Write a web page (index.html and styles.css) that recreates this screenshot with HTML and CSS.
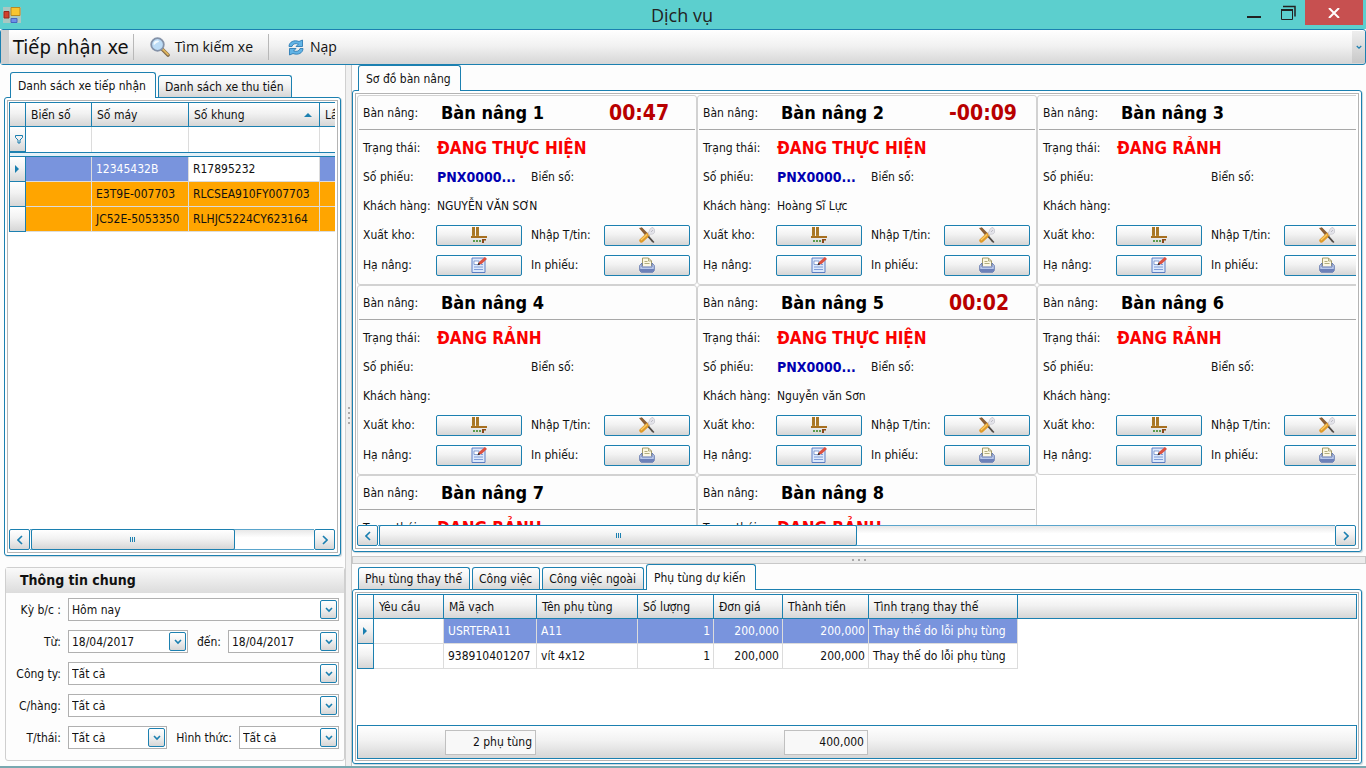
FILE: index.html
```html
<!DOCTYPE html>
<html lang="vi">
<head>
    <meta charset="UTF-8">
    <meta name="viewport" content="width=device-width, initial-scale=1.0">
    <title>Dịch vụ</title>
    <link rel="stylesheet" href="styles.css">
</head>
<body>
    <!-- shared icons -->
    <svg class="icon-defs" width="0" height="0" aria-hidden="true">
        <symbol id="i-down" viewBox="0 0 8 6"><path d="M1 1l3 3 3-3" fill="none" stroke="#1a7fb0" stroke-width="1.6"/></symbol>
        <symbol id="i-left" viewBox="0 0 6 10"><path d="M5 1L1 5l4 4" fill="none" stroke="#1a7fb0" stroke-width="1.6"/></symbol>
        <symbol id="i-right" viewBox="0 0 6 10"><path d="M1 1l4 4-4 4" fill="none" stroke="#1a7fb0" stroke-width="1.6"/></symbol>
        <symbol id="i-row" viewBox="0 0 4 8"><path d="M0 0l4 4-4 4z" fill="#1a7fb0"/></symbol>
        <symbol id="i-stock" viewBox="0 0 16 16">
            <path d="M1 0h3v9H1zM5 0h3v9H5z" fill="#b8862b"/>
            <path d="M1 1h3M1 3h3M1 5h3M1 7h3M5 1h3M5 3h3M5 5h3M5 7h3" stroke="#8a5c1c" stroke-width=".7"/>
            <path d="M0 9h16v2H0z" fill="#a8701f"/>
            <path d="M11 12h4v1.500h-2V16h-2z" fill="#8a4a1c"/>
            <path d="M2 13h2v2H2zM5 13h2v2H5zM8 13h2v2H8z" fill="#5c9a4c"/>
        </symbol>
        <symbol id="i-tools" viewBox="0 0 16 16">
            <path d="M2 1l12 14" stroke="#4a4038" stroke-width="1.500"/>
            <path d="M0 1l3-.5 7 7-3 2z" fill="#8a6038"/>
            <path d="M2.500 13.500l6-5.500" stroke="#e09a28" stroke-width="4.400" stroke-linecap="round"/>
            <path d="M2 13l6-5.500" stroke="#f8cd68" stroke-width="1.300"/>
            <path d="M9 6l1.500-2C10.500 2 12 .5 14 .5l1.500 2v3C14.500 7 13 7.500 11.500 7L10 8.500z" fill="#e4e4ea" stroke="#b0b0ba" stroke-width=".5"/>
            <path d="M12 5l2-2" stroke="#b0b0ba" stroke-width=".8"/>
            <path d="M9.500 9.500l5.500 6" stroke="#55504c" stroke-width="1.200"/>
        </symbol>
        <symbol id="i-edit" viewBox="0 0 16 16">
            <path d="M1 1h13v14.500H1z" fill="#dce8fb" stroke="#5c7fc4"/>
            <path d="M3 4h5v3.500H3z" fill="#fff" stroke="#5c7fc4" stroke-width=".7"/>
            <path d="M3 10h9M3 12.500h9M10 7.500h2" stroke="#7f9cd8"/>
            <path d="M7 7.500l1-2.500 6-5L16 2l-5.500 5z" fill="#dc5040"/>
            <path d="M6.500 8.300l1-2.800 2 2z" fill="#3f3028"/>
        </symbol>
        <symbol id="i-print" viewBox="0 0 16 16">
            <path d="M3.500 9V1h6l3 3v5" fill="#fdf8e2" stroke="#a09a68"/>
            <path d="M9.500 1v3h3M5.500 4.500h3M5.500 6.500h5" fill="none" stroke="#a09a68" stroke-width=".8"/>
            <path d="M3 6L.7 8.500v5l1.500 1.800h11.600l1.500-1.800v-5L13 6v4H3z" fill="#b9c8ea" stroke="#6075ae" stroke-width=".9"/>
            <path d="M1 12h14v1.500l-1.500 1.500h-11L1 13.500z" fill="#6c80b8"/>
        </symbol>
    </svg>

    <header class="titlebar">
        <svg class="app-icon" width="18" height="18" viewBox="0 0 18 18">
            <path d="M0 1h18v16H0z" fill="#a9c8c2"/>
            <path d="M8 1.500h9v8H8z" fill="#f8c530" stroke="#b78a22"/>
            <path d="M1 5.500h5v6.500H1z" fill="#d0402c" stroke="#94281c"/>
            <path d="M8 12.500h6v4H8z" fill="#6d90e8" stroke="#4565c0"/>
        </svg>
        <h1>Dịch vụ</h1>
        <div class="window-buttons">
            <button aria-label="Minimize"><svg width="14" height="18"><path d="M0 13h14" stroke="#222" stroke-width="2"/></svg></button>
            <button aria-label="Restore"><svg width="16" height="18" viewBox="0 0 16 18"><path d="M1.500 5.500h11v10h-11z" fill="none" stroke="#222"/><path d="M1 6h12" stroke="#222" stroke-width="2"/><path d="M3 2.500h12v10" fill="none" stroke="#222" stroke-width="1.500"/></svg></button>
            <button class="close" aria-label="Close"><svg width="12" height="10" viewBox="0 0 12 10"><path d="M1 0l10 10M11 0L1 10" stroke="#fff" stroke-width="2"/></svg></button>
        </div>
    </header>

    <nav class="toolbar">
        <span class="toolbar-title">Tiếp nhận xe</span>
        <button class="tool">
            <svg width="20" height="20" viewBox="0 0 20 20">
                <path d="M12 12l6 6" stroke="#7f6a4a" stroke-width="3.600" stroke-linecap="round"/>
                <path d="M13 12.500l5 5" stroke="#dfb45c" stroke-width="1.800" stroke-linecap="round"/>
                <circle cx="7.500" cy="7.500" r="6.300" fill="#bcdcf6" stroke="#8492a8" stroke-width="1.800"/>
                <path d="M3.500 7.500a4 4 0 0 1 4-4c2 0 2 1.500 0 2s-2.500 3-4 2z" fill="#f2faff"/>
            </svg>
            Tìm kiếm xe
        </button>
        <button class="tool tool-reload">
            <svg width="16" height="17" viewBox="0 0 16 17">
                <path d="M1 7.500C1 3 6 .5 11 2.500L14.500 1v6.500H8l2.500-2.500C7 4 4.500 5 4 7.500z" fill="#62b4e6" stroke="#2f7db4" stroke-width=".9"/>
                <path d="M15 9.500c0 4.500-5 7-10 5L1.500 16V9.500H8L5.500 12c3.500 1 6 0 6.500-2.500z" fill="#62b4e6" stroke="#2f7db4" stroke-width=".9"/>
            </svg>
            Nạp
        </button>
        <button class="toolbar-more" aria-label="More"><svg width="6" height="5"><use href="#i-down"/></svg></button>
    </nav>

    <main class="workspace">
        <aside class="sidebar">
            <div class="tabs">
                <button class="tab active">Danh sách xe tiếp nhận</button>
                <button class="tab">Danh sách xe thu tiền</button>
            </div>
            <section class="panel vehicle-panel">
                <div class="panel-inner">
                    <div class="grid-area">
                        <table class="grid vehicles">
                            <colgroup><col class="c-mark"><col class="c-plate"><col class="c-engine"><col class="c-frame"><col class="c-times"></colgroup>
                            <thead>
                                <tr><th></th><th>Biển số</th><th>Số máy</th><th class="sorted">Số khung</th><th>Lần</th></tr>
                            </thead>
                            <tbody>
                                <tr class="filter">
                                    <th><svg width="8" height="9" viewBox="0 0 8 9"><path d="M.5 .5h7v2L5 5v3H3V5L.5 2.500z" fill="none" stroke="#1a7fb0"/></svg></th>
                                    <td></td><td></td><td></td><td></td>
                                </tr>
                                <tr class="divider"><td colspan="5"></td></tr>
                                <tr class="selected"><th><svg width="4" height="8"><use href="#i-row"/></svg></th><td></td><td>12345432B</td><td class="focused">R17895232</td><td></td></tr>
                                <tr class="warn"><th></th><td></td><td>E3T9E-007703</td><td>RLCSEA910FY007703</td><td></td></tr>
                                <tr class="warn"><th></th><td></td><td>JC52E-5053350</td><td>RLHJC5224CY623164</td><td></td></tr>
                            </tbody>
                        </table>
                    </div>
                    <div class="scrollbar">
                        <button aria-label="Left"><svg width="6" height="10"><use href="#i-left"/></svg></button>
                        <div class="track"><div class="thumb thumb-list"></div></div>
                        <button aria-label="Right"><svg width="6" height="10"><use href="#i-right"/></svg></button>
                    </div>
                </div>
            </section>

            <form class="filters">
                <h2>Thông tin chung</h2>
                <div class="field-row">
                    <label for="period">Kỳ b/c :</label>
                    <div class="combo"><select id="period"><option>Hôm nay</option></select><span class="drop"><svg width="8" height="6"><use href="#i-down"/></svg></span></div>
                </div>
                <div class="field-row">
                    <label for="from">Từ:</label>
                    <div class="combo combo-from"><input id="from" type="text" value="18/04/2017"><span class="drop"><svg width="8" height="6"><use href="#i-down"/></svg></span></div>
                    <label class="mid" for="to">đến:</label>
                    <div class="combo"><input id="to" type="text" value="18/04/2017"><span class="drop"><svg width="8" height="6"><use href="#i-down"/></svg></span></div>
                </div>
                <div class="field-row">
                    <label for="company">Công ty:</label>
                    <div class="combo"><select id="company"><option>Tất cả</option></select><span class="drop"><svg width="8" height="6"><use href="#i-down"/></svg></span></div>
                </div>
                <div class="field-row">
                    <label for="store">C/hàng:</label>
                    <div class="combo"><select id="store"><option>Tất cả</option></select><span class="drop"><svg width="8" height="6"><use href="#i-down"/></svg></span></div>
                </div>
                <div class="field-row">
                    <label for="state">T/thái:</label>
                    <div class="combo combo-state"><select id="state"><option>Tất cả</option></select><span class="drop"><svg width="8" height="6"><use href="#i-down"/></svg></span></div>
                    <label class="mid mid-kind" for="kind">Hình thức:</label>
                    <div class="combo"><select id="kind"><option>Tất cả</option></select><span class="drop"><svg width="8" height="6"><use href="#i-down"/></svg></span></div>
                </div>
            </form>
        </aside>

        <div class="splitter-v"><i></i><i></i><i></i><i></i></div>

        <div class="content">
            <div class="tabs">
                <button class="tab active">Sơ đồ bàn nâng</button>
            </div>
            <section class="panel lift-panel">
                <div class="panel-inner">
                    <div class="lifts" id="lifts"></div>
                    <div class="scrollbar">
                        <button aria-label="Left"><svg width="6" height="10"><use href="#i-left"/></svg></button>
                        <div class="track"><div class="thumb thumb-lifts"></div></div>
                        <button aria-label="Right"><svg width="6" height="10"><use href="#i-right"/></svg></button>
                    </div>
                </div>
            </section>

            <div class="splitter-h"><i></i><i></i><i></i></div>

            <div class="tabs">
                <button class="tab">Phụ tùng thay thế</button>
                <button class="tab">Công việc</button>
                <button class="tab">Công việc ngoài</button>
                <button class="tab active">Phụ tùng dự kiến</button>
            </div>
            <section class="panel parts-panel">
                <div class="panel-inner">
                    <div class="grid-area">
                        <table class="grid parts">
                            <colgroup><col class="c-mark"><col class="c-req"><col class="c-code"><col class="c-name"><col class="c-qty"><col class="c-price"><col class="c-total"><col class="c-cond"><col></colgroup>
                            <thead>
                                <tr><th></th><th>Yêu cầu</th><th>Mã vạch</th><th>Tên phụ tùng</th><th>Số lượng</th><th>Đơn giá</th><th>Thành tiền</th><th>Tình trạng thay thế</th><th></th></tr>
                            </thead>
                            <tbody>
                                <tr class="selected"><th><svg width="4" height="8"><use href="#i-row"/></svg></th><td class="focused"></td><td>USRTERA11</td><td>A11</td><td class="num">1</td><td class="num">200,000</td><td class="num">200,000</td><td>Thay thế do lỗi phụ tùng</td><td class="rest"></td></tr>
                                <tr><th></th><td></td><td>938910401207</td><td>vít 4x12</td><td class="num">1</td><td class="num">200,000</td><td class="num">200,000</td><td>Thay thế do lỗi phụ tùng</td><td class="rest"></td></tr>
                            </tbody>
                        </table>
                    </div>
                    <div class="summary">
                        <output class="sum-count">2 phụ tùng</output>
                        <output class="sum-total">400,000</output>
                    </div>
                </div>
            </section>
        </div>
    </main>

    <footer class="taskbar-edge"></footer>

    <script>
        const BUSY = 'ĐANG THỰC HIỆN';
        const FREE = 'ĐANG RẢNH';
        const lifts = [
            { status: BUSY, time: '00:47', ticket: 'PNX0000...', customer: 'NGUYỄN VĂN SƠN' },
            { status: BUSY, time: '-00:09', ticket: 'PNX0000...', customer: 'Hoàng Sĩ Lực' },
            { status: FREE },
            { status: FREE },
            { status: BUSY, time: '00:02', ticket: 'PNX0000...', customer: 'Nguyễn văn Sơn' },
            { status: FREE },
            { status: FREE },
            { status: FREE }
        ];

        const action = (id, icon, text) => `
            <label for="${id}">${text}</label>
            <button id="${id}"><svg width="16" height="16"><use href="#${icon}"/></svg></button>`;

        document.getElementById('lifts').innerHTML = lifts.map((l, i) => `
            <article class="lift">
                <header>
                    <span>Bàn nâng:</span>
                    <h3>Bàn nâng ${i + 1}</h3>
                    <time>${l.time || ''}</time>
                </header>
                <div class="lift-body">
                    <span>Trạng thái:</span><strong class="status">${l.status}</strong>
                    <span>Số phiếu:</span><strong class="ticket">${l.ticket || ''}</strong><span>Biển số:</span><span></span>
                    <span>Khách hàng:</span><span class="customer">${l.customer || ''}</span>
                    ${action('out' + i, 'i-stock', 'Xuất kho:')}
                    ${action('info' + i, 'i-tools', 'Nhập T/tin:')}
                    ${action('lower' + i, 'i-edit', 'Hạ nâng:')}
                    ${action('print' + i, 'i-print', 'In phiếu:')}
                </div>
            </article>`).join('');
    </script>
</body>
</html>
```
FILE: styles.css
```css
* {
    box-sizing: border-box;
}
:root {
    --blue: #1c80b0;
    --grey: #b4b4b4;
    --face: linear-gradient(#ffffff, #f2f2f2 45%, #d6d6d6);
}
body {
    margin: 0;
    height: 100vh;
    display: flex;
    flex-direction: column;
    overflow: hidden;
    background-color: #fdfdfd;
    font-family: "DejaVu Sans Condensed", "Noto Sans", sans-serif;
    font-size: 12px;
    line-height: 16px;
    color: #111;
}
button, input, select {
    font: inherit;
    color: inherit;
    margin: 0;
    padding: 0;
}
h1, h2, h3 {
    margin: 0;
}
svg {
    display: block;
}
.icon-defs {
    position: absolute;
}

/* title bar */
.titlebar {
    display: flex;
    align-items: center;
    height: 29px;
    padding-right: 3px;
    background-color: #5ccfce;
}
.app-icon {
    margin: 0 0 0 3px;
}
.titlebar h1 {
    flex: 1;
    padding-left: 106px;
    text-align: center;
    font-family: "Open Sans", sans-serif;
    font-size: 18px;
    font-weight: 400;
    line-height: 28px;
    color: #222;
}
.window-buttons {
    display: flex;
    align-self: flex-start;
    height: 25px;
}
.window-buttons button {
    width: 34px;
    display: flex;
    justify-content: center;
    align-items: center;
    border: 0;
    background: none;
}
.window-buttons .close {
    width: 58px;
    background-color: #c75050;
}

/* toolbar */
.toolbar {
    display: flex;
    align-items: center;
    height: 36px;
    border: 1px solid var(--blue);
    border-radius: 3px;
    background: var(--face);
    font-family: "Open Sans", sans-serif;
    font-size: 14px;
}
.toolbar-title {
    padding: 0 4px;
    border-left: 8px solid #d0d0d0;
    font-family: "DejaVu Sans Condensed", "Noto Sans", sans-serif;
    font-size: 20px;
    line-height: 34px;
}
.tool {
    display: flex;
    align-items: center;
    gap: 5px;
    height: 26px;
    padding: 0 15px 0 16px;
    border: 0;
    border-left: 1px solid #b8b8b8;
    background: none;
}
.tool-reload {
    padding-left: 19px;
    gap: 6px;
}
.toolbar-more {
    display: flex;
    justify-content: center;
    align-items: center;
    width: 13px;
    height: 32px;
    margin-left: auto;
    border: 0;
    background: linear-gradient(#eeeeee, #c8c8c8);
}

.workspace {
    flex: 1;
    display: flex;
    min-height: 0;
}
.sidebar {
    width: 345px;
    display: flex;
    flex-direction: column;
    padding: 7px 0 5px 4px;
}
.content {
    flex: 1;
    min-width: 0;
    display: flex;
    flex-direction: column;
    padding: 0 4px 2px 0;
}

/* tabs */
.tabs {
    display: flex;
    align-items: flex-end;
    gap: 2px;
    height: 25px;
    padding-left: 6px;
}
.tab {
    height: 22px;
    padding: 0 7px 0 6px;
    border: 1px solid var(--blue);
    border-bottom: 0;
    border-radius: 3px 3px 0 0;
    background: var(--face);
    white-space: nowrap;
}
.tab.active {
    position: relative;
    z-index: 1;
    height: 26px;
    margin-bottom: -1px;
    padding: 0 9px 0 7px;
    background: #fdfdfd;
}

/* framed panels */
.panel {
    display: flex;
    padding: 2px;
    border: 1px solid var(--blue);
    border-radius: 3px;
    background-color: #fff;
    box-shadow: 1px 1px 1px #c8d4da;
}
.panel-inner {
    flex: 1;
    min-width: 0;
    display: flex;
    flex-direction: column;
    padding: 1px;
    border: 1px solid var(--grey);
}
.vehicle-panel {
    flex: 1;
    margin-right: 4px;
}
.lift-panel {
    flex: 1;
    min-height: 0;
}
.vehicle-panel .panel-inner,
.lift-panel .panel-inner {
    padding: 1px 2px 2px 1px;
}
.parts-panel {
    height: 175px;
}
.grid-area {
    flex: 1;
    overflow: hidden;
}

/* data grids */
.grid {
    table-layout: fixed;
    border-collapse: separate;
    border-spacing: 0;
}
.vehicles {
    width: 350px;
}
.parts {
    width: 100%;
}
.c-mark { width: 17px; }
.c-plate { width: 66px; }
.c-engine { width: 97px; }
.c-frame { width: 131px; }
.c-req { width: 70px; }
.c-code { width: 93px; }
.c-name { width: 101px; }
.c-qty { width: 76px; }
.c-price { width: 69px; }
.c-total { width: 86px; }
.c-cond { width: 149px; }
.grid th,
.grid td {
    height: 25px;
    padding: 0 4px;
    overflow: hidden;
    white-space: nowrap;
    text-align: left;
    font-weight: 400;
}
.grid td {
    border-right: 1px solid #dcdcdc;
    border-bottom: 1px solid #dcdcdc;
}
.grid th {
    padding: 0 5px;
    border-right: 1px solid var(--blue);
    border-bottom: 1px solid var(--blue);
    background: var(--face);
}
.grid th:first-child {
    border-left: 1px solid var(--blue);
}
.grid thead th {
    border-top: 1px solid var(--blue);
}
.grid .num {
    text-align: right;
    padding-right: 3px;
}
.grid .rest {
    border: 0;
    background: #fff;
}
.sorted::after {
    content: "";
    float: right;
    margin: 6px 2px 0 0;
    border: 4px solid transparent;
    border-top: 0;
    border-bottom-color: var(--blue);
}
.grid .filter td {
    border-bottom: 0;
}
.grid .divider td {
    height: 5px;
    padding: 0;
    border: 1px solid var(--blue);
    background-color: #e4f1f8;
}
.selected td {
    background-color: #7994dd;
    color: #fff;
}
.selected .focused {
    background-color: #fff;
    color: #111;
}
.warn td {
    background-color: #ffa500;
}

/* scrollbars */
.scrollbar {
    display: flex;
    height: 21px;
}
.scrollbar button {
    width: 21px;
    display: flex;
    justify-content: center;
    align-items: center;
    border: 1px solid var(--blue);
    border-radius: 2px;
    background: var(--face);
}
.track {
    flex: 1;
    padding-left: 1px;
    border-top: 1px solid #5aa5cc;
    border-bottom: 1px solid #5aa5cc;
    background: linear-gradient(#e8e8e8, #ffffff 40%);
}
.thumb {
    height: 21px;
    margin-top: -1px;
    display: flex;
    justify-content: center;
    align-items: center;
    border: 1px solid var(--blue);
    border-radius: 2px;
    background: var(--face);
}
.thumb::after {
    content: "";
    width: 5px;
    height: 5px;
    background: repeating-linear-gradient(90deg, var(--blue) 0 1px, transparent 1px 2px);
}
.thumb-list {
    width: 72%;
}
.thumb-lifts {
    width: 50%;
}

/* filter form */
.filters {
    margin: 11px 0 0 1px;
    padding-bottom: 11px;
    border: 1px solid #cfcfcf;
    border-radius: 3px;
}
.filters h2 {
    margin-bottom: 5px;
    padding-left: 14px;
    background: linear-gradient(#fafafa, #dcdcdc);
    font-size: 14px;
    line-height: 25px;
}
.field-row {
    display: flex;
    align-items: center;
    height: 23px;
    padding-right: 5px;
}
.field-row + .field-row {
    margin-top: 9px;
}
.field-row label {
    width: 62px;
    padding-right: 7px;
    text-align: right;
    white-space: nowrap;
}
.field-row .mid {
    width: 40px;
}
.field-row .mid-kind {
    width: 72px;
}
.combo {
    position: relative;
    flex: 1;
    height: 23px;
    border: 1px solid #b0b0b0;
    background-color: #fff;
}
.combo-from {
    flex: 0 0 120px;
}
.combo-state {
    flex: 0 0 99px;
}
.combo input,
.combo select {
    width: 100%;
    height: 21px;
    padding: 0 3px;
    border: 0;
    background: none;
    appearance: none;
}
.drop {
    position: absolute;
    top: 1px;
    right: 1px;
    width: 17px;
    height: 19px;
    display: flex;
    justify-content: center;
    align-items: center;
    border: 1px solid var(--blue);
    border-radius: 2px;
    background: var(--face);
    pointer-events: none;
}

/* splitters */
.splitter-v {
    width: 7px;
    display: flex;
    flex-direction: column;
    align-items: center;
    justify-content: center;
    gap: 3px;
    border-left: 1px solid #d0d0d0;
    border-right: 1px solid #c4c4c4;
    background-color: #f0f0f0;
}
.splitter-h {
    height: 8px;
    margin: 4px -4px 0 0;
    display: flex;
    align-items: center;
    justify-content: center;
    gap: 4px;
    border: 1px solid #c8c8c8;
    background-color: #ececec;
}
.splitter-v i,
.splitter-h i {
    width: 2px;
    height: 2px;
    background-color: #aaa;
}

/* lift cards */
.lifts {
    flex: 1;
    min-height: 0;
    display: grid;
    grid-template-columns: repeat(3, 340px);
    grid-auto-rows: 190px;
    overflow: hidden;
}
.lift {
    border: 1px solid #d2d2d2;
    border-radius: 3px;
    background-color: #fdfdfd;
}
.lift header {
    display: grid;
    grid-template-columns: 78px 168px auto;
    align-items: center;
    height: 34px;
    margin: 0 1px;
    padding-left: 4px;
    border-bottom: 1px solid #a8a8a8;
}
.lift h3 {
    font-size: 18px;
    line-height: 24px;
    color: #000;
}
.lift time {
    font-size: 21px;
    font-weight: 700;
    line-height: 24px;
    color: #b80000;
}
.lift-body {
    display: grid;
    grid-template-columns: 73px 95px 73px 86px;
    grid-template-rows: 31px 28px 29px 30px 30px;
    align-items: center;
    padding: 2px 0 0 5px;
    white-space: nowrap;
}
.status {
    grid-column: 2 / -1;
    padding-left: 1px;
    font-size: 17px;
    color: #fa0000;
}
.ticket {
    padding-left: 1px;
    font-size: 14px;
    color: #0000b0;
}
.customer {
    grid-column: 2 / -1;
    padding-left: 1px;
}
.lift-body button {
    width: 86px;
    height: 21px;
    display: flex;
    justify-content: center;
    align-items: center;
    border: 1px solid var(--blue);
    border-radius: 2px;
    background: var(--face);
}

/* totals under the parts grid */
.summary {
    display: grid;
    grid-template-columns: 87px 91px 248px 84px;
    align-items: center;
    height: 34px;
    border: 1px solid var(--blue);
    background: var(--face);
}
.summary output {
    height: 25px;
    padding-right: 3px;
    border: 1px solid #c0c0c0;
    background-color: #f8f8f8;
    line-height: 23px;
    text-align: right;
}
.sum-count {
    grid-column: 2;
}
.sum-total {
    grid-column: 4;
}
.taskbar-edge {
    height: 2px;
    background-color: #78a8b0;
}
```
